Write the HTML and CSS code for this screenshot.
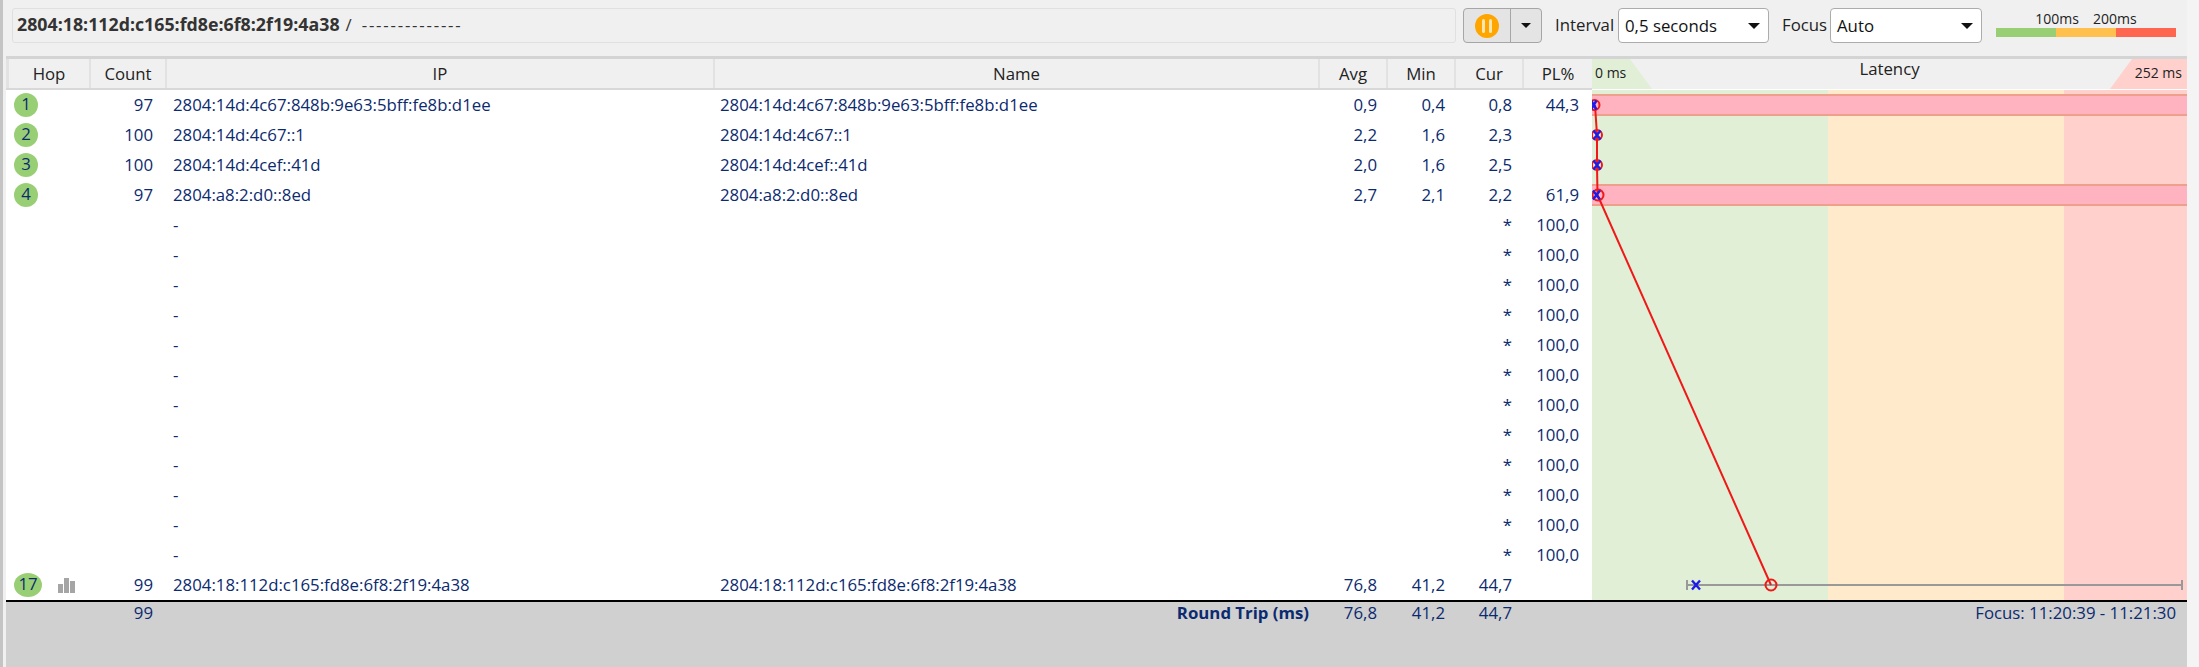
FILE: index.html
```html
<!DOCTYPE html>
<html lang="en">
<head>
    <meta charset="UTF-8">
    <meta name="viewport" content="width=device-width, initial-scale=1.0">
    <title>Trace route</title>
    <link rel="stylesheet" href="styles.css">
</head>
<body>

<div id="app">
    <div class="toolbar">
        <div class="target">
            <b>2804:18:112d:c165:fd8e:6f8:2f19:4a38</b>
            <span class="slash">/</span>
            <span class="dashes">--------------</span>
        </div>
        <div class="split-button">
            <span class="split-main"><span class="pause-icon"></span></span>
            <span class="split-arrow"><span class="caret small"></span></span>
        </div>
        <span class="field-label label-interval">Interval</span>
        <div class="select select-interval">0,5 seconds<span class="caret"></span></div>
        <span class="field-label label-focus">Focus</span>
        <div class="select select-focus">Auto<span class="caret"></span></div>
        <div class="legend">
            <div class="legend-text"><span>100ms</span><span>200ms</span></div>
            <div class="legend-bar"><i class="good"></i><i class="warn"></i><i class="bad"></i></div>
        </div>
    </div>

    <div class="trace">
        <div class="hops">
            <div class="row head">
                <div class="c-hop">Hop</div>
                <div class="c-count">Count</div>
                <div class="c-ip">IP</div>
                <div class="c-name">Name</div>
                <div class="c-avg">Avg</div>
                <div class="c-min">Min</div>
                <div class="c-cur">Cur</div>
                <div class="c-pl">PL%</div>
            </div>

            <div class="row">
                <div class="c-hop"><span class="badge">1</span></div>
                <div class="c-count">97</div>
                <div class="c-ip">2804:14d:4c67:848b:9e63:5bff:fe8b:d1ee</div>
                <div class="c-name">2804:14d:4c67:848b:9e63:5bff:fe8b:d1ee</div>
                <div class="c-avg">0,9</div>
                <div class="c-min">0,4</div>
                <div class="c-cur">0,8</div>
                <div class="c-pl">44,3</div>
            </div>
            <div class="row">
                <div class="c-hop"><span class="badge">2</span></div>
                <div class="c-count">100</div>
                <div class="c-ip">2804:14d:4c67::1</div>
                <div class="c-name">2804:14d:4c67::1</div>
                <div class="c-avg">2,2</div>
                <div class="c-min">1,6</div>
                <div class="c-cur">2,3</div>
                <div class="c-pl"></div>
            </div>
            <div class="row">
                <div class="c-hop"><span class="badge">3</span></div>
                <div class="c-count">100</div>
                <div class="c-ip">2804:14d:4cef::41d</div>
                <div class="c-name">2804:14d:4cef::41d</div>
                <div class="c-avg">2,0</div>
                <div class="c-min">1,6</div>
                <div class="c-cur">2,5</div>
                <div class="c-pl"></div>
            </div>
            <div class="row">
                <div class="c-hop"><span class="badge">4</span></div>
                <div class="c-count">97</div>
                <div class="c-ip">2804:a8:2:d0::8ed</div>
                <div class="c-name">2804:a8:2:d0::8ed</div>
                <div class="c-avg">2,7</div>
                <div class="c-min">2,1</div>
                <div class="c-cur">2,2</div>
                <div class="c-pl">61,9</div>
            </div>

            <!-- hops that never answered -->
            <div class="row"><div class="c-hop"></div><div class="c-count"></div><div class="c-ip">-</div><div class="c-name"></div><div class="c-avg"></div><div class="c-min"></div><div class="c-cur">*</div><div class="c-pl">100,0</div></div>
            <div class="row"><div class="c-hop"></div><div class="c-count"></div><div class="c-ip">-</div><div class="c-name"></div><div class="c-avg"></div><div class="c-min"></div><div class="c-cur">*</div><div class="c-pl">100,0</div></div>
            <div class="row"><div class="c-hop"></div><div class="c-count"></div><div class="c-ip">-</div><div class="c-name"></div><div class="c-avg"></div><div class="c-min"></div><div class="c-cur">*</div><div class="c-pl">100,0</div></div>
            <div class="row"><div class="c-hop"></div><div class="c-count"></div><div class="c-ip">-</div><div class="c-name"></div><div class="c-avg"></div><div class="c-min"></div><div class="c-cur">*</div><div class="c-pl">100,0</div></div>
            <div class="row"><div class="c-hop"></div><div class="c-count"></div><div class="c-ip">-</div><div class="c-name"></div><div class="c-avg"></div><div class="c-min"></div><div class="c-cur">*</div><div class="c-pl">100,0</div></div>
            <div class="row"><div class="c-hop"></div><div class="c-count"></div><div class="c-ip">-</div><div class="c-name"></div><div class="c-avg"></div><div class="c-min"></div><div class="c-cur">*</div><div class="c-pl">100,0</div></div>
            <div class="row"><div class="c-hop"></div><div class="c-count"></div><div class="c-ip">-</div><div class="c-name"></div><div class="c-avg"></div><div class="c-min"></div><div class="c-cur">*</div><div class="c-pl">100,0</div></div>
            <div class="row"><div class="c-hop"></div><div class="c-count"></div><div class="c-ip">-</div><div class="c-name"></div><div class="c-avg"></div><div class="c-min"></div><div class="c-cur">*</div><div class="c-pl">100,0</div></div>
            <div class="row"><div class="c-hop"></div><div class="c-count"></div><div class="c-ip">-</div><div class="c-name"></div><div class="c-avg"></div><div class="c-min"></div><div class="c-cur">*</div><div class="c-pl">100,0</div></div>
            <div class="row"><div class="c-hop"></div><div class="c-count"></div><div class="c-ip">-</div><div class="c-name"></div><div class="c-avg"></div><div class="c-min"></div><div class="c-cur">*</div><div class="c-pl">100,0</div></div>
            <div class="row"><div class="c-hop"></div><div class="c-count"></div><div class="c-ip">-</div><div class="c-name"></div><div class="c-avg"></div><div class="c-min"></div><div class="c-cur">*</div><div class="c-pl">100,0</div></div>
            <div class="row"><div class="c-hop"></div><div class="c-count"></div><div class="c-ip">-</div><div class="c-name"></div><div class="c-avg"></div><div class="c-min"></div><div class="c-cur">*</div><div class="c-pl">100,0</div></div>

            <div class="row">
                <div class="c-hop">
                    <span class="badge wide">17</span>
                    <svg class="bars" width="17" height="15" viewBox="0 0 17 15"><rect x="0" y="6" width="5" height="9"/><rect x="6" y="0" width="5" height="15"/><rect x="12" y="3" width="5" height="12"/></svg>
                </div>
                <div class="c-count">99</div>
                <div class="c-ip">2804:18:112d:c165:fd8e:6f8:2f19:4a38</div>
                <div class="c-name">2804:18:112d:c165:fd8e:6f8:2f19:4a38</div>
                <div class="c-avg">76,8</div>
                <div class="c-min">41,2</div>
                <div class="c-cur">44,7</div>
                <div class="c-pl"></div>
            </div>
        </div>

        <div class="chart">
            <div class="chart-head">
                <span class="corner corner-min"></span>
                <span class="corner corner-max"></span>
                <span class="scale-min">0 ms</span>
                <span class="chart-title">Latency</span>
                <span class="scale-max">252 ms</span>
            </div>
            <div class="chart-body">
                <div class="band good"></div>
                <div class="band warn"></div>
                <div class="band bad"></div>
                <div class="loss loss-1"></div>
                <div class="loss loss-4"></div>
                <!-- x is the latency in px from the left edge of the plot, y is row centre -->
                <svg class="plot" width="595" height="510" viewBox="0 0 595 510">
                    <path class="range" d="M95 495H590M95 490V500M590 490V500"/>
                    <polyline class="route" points="3,15 5,45 5,75 5.5,105 179,495"/>
                    <circle class="cur" cx="2.5" cy="15" r="5"/>
                    <circle class="cur" cx="5" cy="45" r="5"/>
                    <circle class="cur" cx="5" cy="75" r="5"/>
                    <circle class="cur" cx="6" cy="105" r="5.5"/>
                    <circle class="cur" cx="179" cy="495" r="5.5"/>
                    <path class="avg" d="M-1 10.5L4.5 19.5M4.5 10.5L-1 19.5M1.5 40.5L8.5 49.5M8.5 40.5L1.5 49.5M1.5 70.5L8.5 79.5M8.5 70.5L1.5 79.5M1 100.5L8 109.5M8 100.5L1 109.5M100 490.5L108 499.5M108 490.5L100 499.5"/>
                </svg>
            </div>
        </div>
    </div>

    <div class="totals">
        <div class="c-hop"></div>
        <div class="c-count">99</div>
        <div class="c-ip"></div>
        <div class="c-name total-label">Round Trip (ms)</div>
        <div class="c-avg">76,8</div>
        <div class="c-min">41,2</div>
        <div class="c-cur">44,7</div>
        <div class="c-pl"></div>
        <div class="focus-range">Focus: 11:20:39 - 11:21:30</div>
    </div>
</div>

</body>
</html>
```

FILE: styles.css
```css
body {
    margin: 0;
    background: #f4f4f4;
    font-family: "Open Sans", "Noto Sans", sans-serif;
    font-size: 16.8px;
    overflow: hidden;
}
#app {
    width: 2184px;
    height: 667px;
    background: #f0f0f0;
    border-left: 3px solid #c4c4c4;
    display: flex;
    flex-direction: column;
}

/* top bar */
.toolbar {
    height: 56px;
    box-sizing: border-box;
    padding: 8px 0 13px 9px;
    display: flex;
    align-items: stretch;
    color: #222;
}
.target {
    flex: none;
    width: 1444px;
    box-sizing: border-box;
    border: 1px solid #e0e0e0;
    border-radius: 3px;
    padding-left: 4px;
    display: flex;
    align-items: center;
    gap: 6px;
    color: #333;
    padding-bottom: 3px;
}
.target b {
    font-weight: 700;
    font-size: 17.8px;
}
.dashes {
    margin-left: 4px;
    letter-spacing: 1.8px;
}
.split-button {
    flex: none;
    width: 79px;
    margin-left: 7px;
    box-sizing: border-box;
    border: 1px solid #a6a6a6;
    border-radius: 4px;
    background: #e4e4e4;
    display: flex;
}
.split-main {
    width: 46px;
    display: flex;
    align-items: center;
    justify-content: center;
    border-right: 1px solid #a6a6a6;
}
.split-arrow {
    flex: 1;
    display: flex;
    align-items: center;
    justify-content: center;
}
.pause-icon {
    width: 24px;
    height: 24px;
    border-radius: 50%;
    background: #ffa500;
    position: relative;
}
.pause-icon::before, .pause-icon::after {
    content: "";
    position: absolute;
    top: 5px;
    width: 3px;
    height: 14px;
    border-radius: 2px;
    background: #fde6b0;
}
.pause-icon::before { left: 7px; }
.pause-icon::after { left: 14px; }
.caret {
    width: 0;
    height: 0;
    border-left: 6px solid transparent;
    border-right: 6px solid transparent;
    border-top: 6px solid #111;
}
.caret.small {
    border-left-width: 5px;
    border-right-width: 5px;
    border-top-width: 5px;
}
.field-label {
    flex: none;
    align-self: center;
    margin-top: -3px;
    white-space: nowrap;
}
.label-interval { margin-left: 13px; width: 59px; }
.label-focus { margin-left: 13px; width: 45px; }
.select {
    flex: none;
    box-sizing: border-box;
    border: 1px solid #acacac;
    border-radius: 4px;
    background: #fff;
    color: #111;
    padding: 0 8px 0 6px;
    display: flex;
    align-items: center;
    justify-content: space-between;
}
.select-interval { width: 151px; margin-left: 4px; }
.select-focus { width: 152px; margin-left: 3px; }
.legend {
    flex: none;
    width: 180px;
    margin-left: 14px;
    font-size: 14px;
    display: flex;
    flex-direction: column;
}
.legend-text {
    height: 20px;
    display: flex;
    justify-content: center;
    gap: 14px;
    line-height: 22px;
}
.legend-bar {
    height: 9px;
    display: flex;
}
.legend-bar i {
    flex: 1;
}
.legend-bar .good { background: #99cf74; }
.legend-bar .warn { background: #ffc04d; }
.legend-bar .bad { background: #ff6650; }

/* table and chart share one height */
.trace {
    display: flex;
    border-top: 3px solid #d4d4d4;
    margin-left: 3px;
    width: 2181px;
}
.hops {
    width: 1586px;
    flex: none;
    background: #fff;
    color: #0b2a6f;
}
.row, .totals {
    display: grid;
    grid-template-columns: 85px 76px 548px 605px 68px 68px 68px 68px;
    align-items: center;
}
.row {
    height: 30px;
}
.row > div {
    padding: 0 11px 2px 5px;
    box-sizing: border-box;
    white-space: nowrap;
}
.c-count, .c-avg, .c-min, .c-cur, .c-pl {
    text-align: right;
}
.row > .c-count { padding-right: 14px; }
.row > .c-ip { padding-left: 6px; }
.row > .c-cur { padding-right: 12px; }
.row > .c-pl { padding-right: 13px; }
.row.head {
    height: 31px;
    box-sizing: border-box;
    border-bottom: 2px solid #d8d8d8;
    background: #f0f0f0;
    color: #222;
}
.row.head > div {
    height: 29px;
    line-height: 29px;
    text-align: center;
    padding: 0;
    border-right: 2px solid #e2e2e2;
    box-sizing: border-box;
}
.row.head > .c-hop { border-left: 3px solid #e2e2e2; }
.row.head > .c-pl { border-right: 0; }
.c-hop {
    display: flex;
    align-items: center;
}
.row.head .c-hop { display: block; }
.row > .c-hop { padding: 0 0 0 8px; }
.badge {
    display: inline-block;
    width: 24px;
    height: 24px;
    line-height: 21px;
    border-radius: 50%;
    background: #99cf74;
    text-align: center;
    flex: none;
}
.badge.wide {
    width: 28px;
}
.bars {
    margin-left: 16px;
    fill: #a5a5a5;
}

/* latency chart */
.chart {
    width: 595px;
    flex: none;
    display: flex;
    flex-direction: column;
}
.chart-head {
    height: 31px;
    box-sizing: border-box;
    border-bottom: 1px solid #fff;
    position: relative;
    color: #222;
    text-align: center;
}
.corner {
    position: absolute;
    top: 0;
    height: 30px;
}
.corner-min {
    left: 0;
    width: 60px;
    background: #e0efd6;
    clip-path: polygon(0 0, 38px 0, 100% 100%, 0 100%);
}
.corner-max {
    right: 0;
    width: 77px;
    background: #ffd0cc;
    clip-path: polygon(22px 0, 100% 0, 100% 100%, 0 100%);
}
.scale-min, .scale-max {
    position: absolute;
    top: 4px;
    font-size: 14px;
    line-height: 20px;
}
.scale-min { left: 3px; }
.scale-max { right: 5px; }
.chart-title {
    position: relative;
    line-height: 20px;
    vertical-align: top;
}
.chart-body {
    height: 510px;
    display: flex;
    position: relative;
}
.band { height: 100%; }
.band.good { width: 236px; background: #e0efd6; }
.band.warn { width: 236px; background: #ffeacc; }
.band.bad { flex: 1; background: #ffd0cc; }
.loss {
    position: absolute;
    left: 0;
    right: 0;
    height: 22px;
    box-sizing: border-box;
    background: #ffb3c0;
    border-top: 2px solid #eea08c;
    border-bottom: 2px solid #eea08c;
}
.loss-1 { top: 4px; }
.loss-4 { top: 94px; }
.plot {
    position: absolute;
    left: 0;
    top: 0;
}
.range {
    fill: none;
    stroke: #999;
    stroke-width: 2;
}
.route {
    fill: none;
    stroke: #f01818;
    stroke-width: 2;
}
.cur {
    fill: none;
    stroke: #f01818;
    stroke-width: 2;
}
.avg {
    fill: none;
    stroke: #1c1ce8;
    stroke-width: 2.4;
}

/* totals strip */
.totals {
    flex: 1;
    margin-left: 3px;
    width: 2181px;
    border-top: 2px solid #000;
    background: #d0d0d0;
    color: #0b2a6f;
    grid-template-columns: 85px 76px 548px 605px 68px 68px 68px 68px 595px;
    align-items: start;
    line-height: 22px;
}
.totals > div {
    padding: 0 11px 0 5px;
    box-sizing: border-box;
    height: 22px;
    white-space: nowrap;
}
.totals > .c-count { padding-right: 14px; }
.totals > .c-cur { padding-right: 12px; }
.total-label {
    text-align: right;
    font-weight: 700;
}
.focus-range {
    text-align: right;
}
```
